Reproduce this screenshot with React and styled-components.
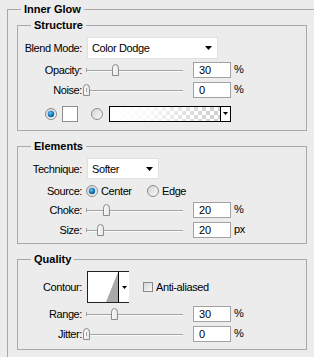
import React from "react"
import styled, { createGlobalStyle } from "styled-components"

const GlobalStyle = createGlobalStyle`
  html, body {
    margin: 0;
    padding: 0;
    background: #ececec;
    overflow: hidden;
  }
  body {
    font-family: "Liberation Sans", Arial, sans-serif;
    font-size: 11px;
    color: #000;
  }
`

const Panel = styled.div`
  width: 314px;
  height: 357px;
  box-sizing: border-box;
  padding: 9px 0 0 7px;
  overflow: hidden;
`

const Outer = styled.div`
  position: relative;
  height: 400px;
  padding: 15px 0 0 9px;
  border-top: 1px solid #a9a9a9;
  border-left: 1px solid #a9a9a9;
`

const Group = styled.div`
  position: relative;
  box-sizing: border-box;
  width: 290px;
  margin-top: ${p => p.$top || 0}px;
  padding: ${p => p.$pad};
  border: 1px solid #a9a9a9;
`

const Legend = styled.span`
  position: absolute;
  top: -7px;
  left: 13px;
  padding: 0 3px;
  background: #ececec;
  font-weight: bold;
  line-height: 13px;
  white-space: nowrap;
`

const Row = styled.div`
  display: flex;
  align-items: center;
  height: ${p => p.$h || 16}px;
  margin-top: ${p => p.$top || 0}px;
  padding-left: ${p => p.$indent || 0}px;
  letter-spacing: -0.4px;
`

const Label = styled.span`
  flex: none;
  width: 64px;
  text-align: right;
  white-space: nowrap;
`

const Select = styled.div`
  display: flex;
  align-items: center;
  justify-content: space-between;
  box-sizing: border-box;
  width: ${p => p.$w}px;
  height: 100%;
  margin-left: 5px;
  padding: 0 5px 0 4px;
  background: #fff;
  border: 1px solid #e0e0e0;
`

const Track = styled.div`
  position: relative;
  flex: none;
  width: 97px;
  height: 16px;
  margin-left: 4px;

  &::before {
    content: "";
    position: absolute;
    left: 0;
    right: 0;
    top: 8px;
    height: 1px;
    background: #a4a4a4;
    box-shadow: 0 1px 0 #fafafa;
  }

  &::after {
    content: "";
    position: absolute;
    left: 0;
    top: 6px;
    width: 1px;
    height: 4px;
    background: #a4a4a4;
  }
`

const ThumbWrap = styled.span`
  position: absolute;
  top: 2px;
  width: 9px;
  height: 12px;
  display: block;
`

const NumBox = styled.div`
  flex: none;
  box-sizing: border-box;
  width: 38px;
  height: 16px;
  margin-left: 10px;
  padding: 1px 0 0 5px;
  line-height: 13px;
  letter-spacing: 0;
  background: #fff;
  border: 1px solid #a2a2a2;
`

const Unit = styled.span`
  margin-left: 3px;
  margin-top: -3px;
`

const Swatch = styled.div`
  flex: none;
  box-sizing: border-box;
  width: 16px;
  height: 16px;
  margin-left: ${p => p.$left || 0}px;
  background: #fff;
  border: 1px solid #8e8e8e;
`

const GradientBox = styled.div`
  flex: none;
  display: flex;
  box-sizing: border-box;
  width: 122px;
  height: 16px;
  margin-left: 6px;
  border: 1px solid #000;
  background: #fff;
`

const GradientFill = styled.div`
  flex: 1;
  background:
    linear-gradient(to right, #fff 0%, rgba(255, 255, 255, 0.85) 35%, rgba(255, 255, 255, 0) 95%),
    repeating-conic-gradient(#d0d0d0 0% 25%, #fff 0% 50%) 0 0 / 8px 8px;
`

const DropPart = styled.div`
  flex: none;
  display: flex;
  align-items: center;
  justify-content: center;
  width: ${p => p.$w || 9}px;
  border-left: 1px solid #000;
  background: #fff;
`

const Option = styled.div`
  flex: none;
  display: flex;
  align-items: center;
  width: ${p => (p.$w ? `${p.$w}px` : "auto")};
  margin-left: ${p => p.$left || 0}px;
`

const OptionText = styled.span`
  margin-left: 3px;
  white-space: nowrap;
`

const ContourBox = styled.div`
  flex: none;
  display: flex;
  box-sizing: border-box;
  width: 42px;
  height: 32px;
  margin-left: 5px;
  border: 1px solid #222;
  background: #fff;
`

const ContourCurve = styled.div`
  flex: 1;
  display: flex;
`

function Arrow({ w = 7, h = 4 }) {
  return (
    <svg width={w} height={h} viewBox={`0 0 ${w} ${h}`}>
      <path d={`M0 0H${w}L${w / 2} ${h}Z`} fill="#000" />
    </svg>
  )
}

function Radio({ on }) {
  const id = React.useId()
  return (
    <svg width="12" height="12" viewBox="0 0 12 12" style={{ flex: "none" }}>
      <defs>
        <linearGradient id={`${id}r`} x1="0" y1="0" x2="1" y2="1">
          <stop offset="0" stopColor="#d2d2d2" />
          <stop offset="1" stopColor="#fbfbfb" />
        </linearGradient>
        <radialGradient id={`${id}b`} cx="0.4" cy="0.35" r="0.7">
          <stop offset="0" stopColor="#6cc3f5" />
          <stop offset="0.6" stopColor="#1479c2" />
          <stop offset="1" stopColor="#0b4f8a" />
        </radialGradient>
      </defs>
      <circle cx="6" cy="6" r="5.5" fill={`url(#${id}r)`} stroke="#8c8c8c" />
      {on && <circle cx="6" cy="6" r="3.2" fill={`url(#${id}b)`} />}
    </svg>
  )
}

function Thumb() {
  return (
    <svg width="9" height="12" viewBox="0 0 9 12">
      <path d="M1.5 11.5V4.2Q1.5 0.5 4.5 0.5Q7.5 0.5 7.5 4.2V11.5Z" fill="#ededed" stroke="#8a8a8a" />
      <path d="M3 10.5V4.5Q3 2 4.5 2" fill="none" stroke="#fff" />
    </svg>
  )
}

function Check() {
  const id = React.useId()
  return (
    <svg width="10" height="10" viewBox="0 0 10 10" style={{ flex: "none", marginLeft: 14 }}>
      <defs>
        <linearGradient id={id} x1="0" y1="0" x2="1" y2="1">
          <stop offset="0" stopColor="#d4d4d4" />
          <stop offset="1" stopColor="#fafafa" />
        </linearGradient>
      </defs>
      <rect x="0.5" y="0.5" width="9" height="9" fill={`url(#${id})`} stroke="#8a8a8a" />
    </svg>
  )
}

function SliderRow({ label, value, pos, unit = "%", top }) {
  return (
    <Row $top={top}>
      <Label>{label}</Label>
      <Track>
        <ThumbWrap style={{ left: Math.round(pos * 97) - 4 }}>
          <Thumb />
        </ThumbWrap>
      </Track>
      <NumBox>{value}</NumBox>
      <Unit>{unit}</Unit>
    </Row>
  )
}

export default function App() {
  return (
    <Panel>
      <GlobalStyle />
      <Outer>
        <Legend>Inner Glow</Legend>

        <Group $pad="11px 0 8px 0">
          <Legend>Structure</Legend>
          <Row $h={22}>
            <Label>Blend Mode:</Label>
            <Select $w={131}>
              <span>Color Dodge</span>
              <Arrow />
            </Select>
          </Row>
          <SliderRow label="Opacity:" value="30" pos={0.3} top={3} />
          <SliderRow label="Noise:" value="0" pos={0} top={4} />
          <Row $h={17} $top={7} $indent={27}>
            <Radio on />
            <Swatch $left={5} />
            <Option $left={13}>
              <Radio />
            </Option>
            <GradientBox>
              <GradientFill />
              <DropPart>
                <Arrow w={5} h={3} />
              </DropPart>
            </GradientBox>
          </Row>
        </Group>

        <Group $top={15} $pad="11px 0 5px 0">
          <Legend>Elements</Legend>
          <Row $h={21}>
            <Label>Technique:</Label>
            <Select $w={72}>
              <span>Softer</span>
              <Arrow />
            </Select>
          </Row>
          <Row $top={4}>
            <Label>Source:</Label>
            <Option $w={61} $left={4}>
              <Radio on />
              <OptionText>Center</OptionText>
            </Option>
            <Option>
              <Radio />
              <OptionText>Edge</OptionText>
            </Option>
          </Row>
          <SliderRow label="Choke:" value="20" pos={0.21} top={3} />
          <SliderRow label="Size:" value="20" pos={0.145} unit="px" top={4} />
        </Group>

        <Group $top={15} $pad="11px 0 7px 0">
          <Legend>Quality</Legend>
          <Row $h={32}>
            <Label>Contour:</Label>
            <ContourBox>
              <ContourCurve>
                <svg width="30" height="30" viewBox="0 0 30 30">
                  <path d="M18 30L30 0V30Z" fill="#a9a9a9" />
                </svg>
              </ContourCurve>
              <DropPart $w={10}>
                <Arrow w={5} h={3} />
              </DropPart>
            </ContourBox>
            <Check />
            <OptionText>Anti-aliased</OptionText>
          </Row>
          <SliderRow label="Range:" value="30" pos={0.29} top={3} />
          <SliderRow label="Jitter:" value="0" pos={0} top={4} />
        </Group>
      </Outer>
    </Panel>
  )
}
